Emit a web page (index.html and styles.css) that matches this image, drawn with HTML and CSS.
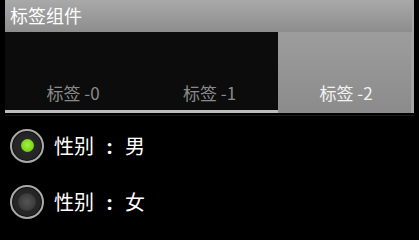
FILE: index.html
```html
<!DOCTYPE html>
<html lang="zh">
<head>
<meta charset="utf-8">
<title>标签组件</title>
<link rel="stylesheet" href="styles.css">
</head>
<body>
<div class="app">
  <div class="titlebar">标签组件</div>
  <div class="tabs">
    <div class="tab">标签 -0</div>
    <div class="tab">标签 -1</div>
    <div class="tab selected">标签 -2</div>
  </div>
  <div class="list">
    <label class="row">
      <span class="radio checked"><span class="dot"></span></span>
      <span class="label">性别<span class="colon">:</span>男</span>
    </label>
    <label class="row">
      <span class="radio"><span class="dot"></span></span>
      <span class="label">性别<span class="colon">:</span>女</span>
    </label>
  </div>
</div>
</body>
</html>
```

FILE: styles.css
```css
html, body {
  margin: 0;
  padding: 0;
  background: #000;
}
body {
  width: 419px;
  height: 228px;
  overflow: hidden;
  font-family: "Noto Sans CJK SC", "Noto Sans", sans-serif;
}
.app {
  margin: 0 5px;
  width: 409px;
}
.titlebar {
  height: 32px;
  line-height: 31px;
  padding-left: 5px;
  color: #fff;
  font-size: 18px;
  background: linear-gradient(#a9a9a9, #8d8d8d);
  box-sizing: border-box;
  border-right: 2px solid #a6a6a6;
}
.tabs {
  display: grid;
  grid-template-columns: 136px 137px 136px;
  height: 81px;
}
.tab {
  display: flex;
  align-items: flex-end;
  justify-content: center;
  box-sizing: border-box;
  padding-bottom: 7px;
  font-size: 17px;
  line-height: 20px;
  color: #8a8a8a;
  background: #0c0c0c;
  border-bottom: 3px solid #bdbdbd;
}
.tab.selected {
  color: #f2f2f2;
  background: linear-gradient(#9d9d9d, #8b8b8b);
  border-bottom: none;
  padding-bottom: 10px;
  box-shadow: inset -3px 0 0 #a4a4a4, inset -1px 0 0 #8a8a8a;
}
.list {
  margin-top: 2px;
  border-top: 1px solid #1a1a1a;
  padding-top: 2px;
}
.row {
  display: flex;
  align-items: center;
  height: 56px;
}
.radio {
  box-sizing: border-box;
  width: 34px;
  height: 34px;
  margin-left: 5px;
  border-radius: 50%;
  border: 2px solid #a9a9a9;
  background: radial-gradient(circle, #2c2c2c 0%, #1f1f1f 100%);
  box-shadow: inset 0 0 0 1px #111;
  display: flex;
  align-items: center;
  justify-content: center;
}
.dot {
  width: 18px;
  height: 18px;
  border-radius: 50%;
  background: radial-gradient(circle, #555 0%, #404040 55%, rgba(40,40,40,0) 100%);
}
.radio.checked .dot {
  width: 13px;
  height: 13px;
  margin-top: -2px;
  background: radial-gradient(circle at 50% 45%, #a8f040 0%, #7cd81c 60%, #5fae12 100%);
}
.label {
  margin-left: 10px;
  color: #fff;
  font-size: 20px;
  line-height: 24px;
  white-space: pre;
}
.colon {
  display: inline-block;
  width: 31px;
  text-align: center;
  font-family: "Noto Sans", sans-serif;
  font-weight: bold;
}
```
